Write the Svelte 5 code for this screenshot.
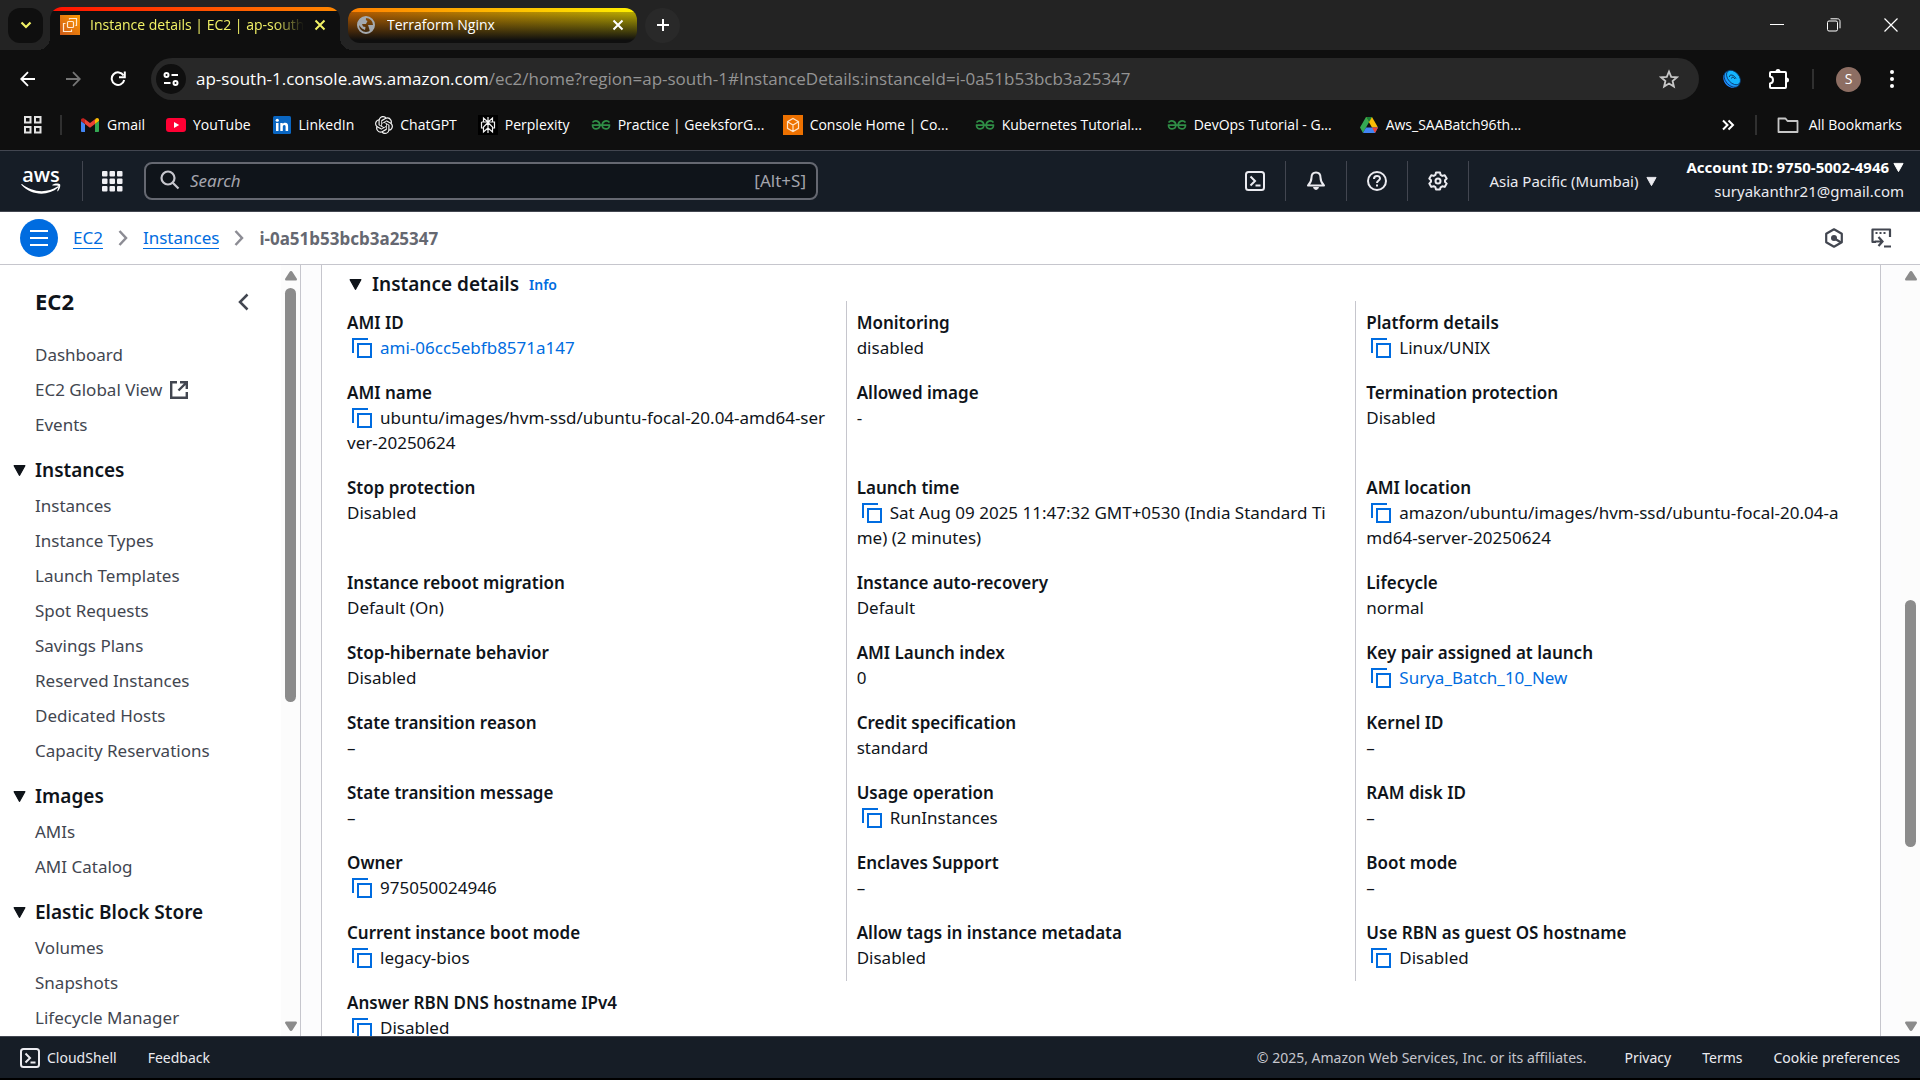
<script>
  const bookmarks = [
    { icon: 'gmail', label: 'Gmail' },
    { icon: 'youtube', label: 'YouTube' },
    { icon: 'linkedin', label: 'LinkedIn' },
    { icon: 'chatgpt', label: 'ChatGPT' },
    { icon: 'perplexity', label: 'Perplexity' },
    { icon: 'gfg', label: 'Practice | GeeksforG...', long: true },
    { icon: 'console', label: 'Console Home | Co...', long: true },
    { icon: 'gfg', label: 'Kubernetes Tutorial...', long: true },
    { icon: 'gfg', label: 'DevOps Tutorial - G...', long: true },
    { icon: 'drive', label: 'Aws_SAABatch96th...', long: true }
  ];

  const topLinks = [
    { label: 'Dashboard' },
    { label: 'EC2 Global View', external: true },
    { label: 'Events' }
  ];

  const groups = [
    {
      title: 'Instances',
      items: ['Instances', 'Instance Types', 'Launch Templates', 'Spot Requests', 'Savings Plans', 'Reserved Instances', 'Dedicated Hosts', 'Capacity Reservations']
    },
    { title: 'Images', items: ['AMIs', 'AMI Catalog'] },
    { title: 'Elastic Block Store', items: ['Volumes', 'Snapshots', 'Lifecycle Manager'] }
  ];

  const fields = [
    { label: 'AMI ID', value: 'ami-06cc5ebfb8571a147', copy: true, link: true },
    { label: 'Monitoring', value: 'disabled' },
    { label: 'Platform details', value: 'Linux/UNIX', copy: true },
    { label: 'AMI name', value: 'ubuntu/images/hvm-ssd/ubuntu-focal-20.04-amd64-server-20250624', copy: true },
    { label: 'Allowed image', value: '-' },
    { label: 'Termination protection', value: 'Disabled' },
    { label: 'Stop protection', value: 'Disabled' },
    { label: 'Launch time', value: 'Sat Aug 09 2025 11:47:32 GMT+0530 (India Standard Time) (2 minutes)', copy: true },
    { label: 'AMI location', value: 'amazon/ubuntu/images/hvm-ssd/ubuntu-focal-20.04-amd64-server-20250624', copy: true },
    { label: 'Instance reboot migration', value: 'Default (On)' },
    { label: 'Instance auto-recovery', value: 'Default' },
    { label: 'Lifecycle', value: 'normal' },
    { label: 'Stop-hibernate behavior', value: 'Disabled' },
    { label: 'AMI Launch index', value: '0' },
    { label: 'Key pair assigned at launch', value: 'Surya_Batch_10_New', copy: true, link: true },
    { label: 'State transition reason', value: '–' },
    { label: 'Credit specification', value: 'standard' },
    { label: 'Kernel ID', value: '–' },
    { label: 'State transition message', value: '–' },
    { label: 'Usage operation', value: 'RunInstances', copy: true },
    { label: 'RAM disk ID', value: '–' },
    { label: 'Owner', value: '975050024946', copy: true },
    { label: 'Enclaves Support', value: '–' },
    { label: 'Boot mode', value: '–' },
    { label: 'Current instance boot mode', value: 'legacy-bios', copy: true },
    { label: 'Allow tags in instance metadata', value: 'Disabled' },
    { label: 'Use RBN as guest OS hostname', value: 'Disabled', copy: true },
    { label: 'Answer RBN DNS hostname IPv4', value: 'Disabled', copy: true }
  ];
</script>

{#snippet caret(size)}
  <svg width={size} height={size} viewBox="0 0 12 12" aria-hidden="true"><path d="M1 1.500h10L6 10.500z" fill="currentColor" stroke="currentColor" stroke-width="1" stroke-linejoin="round" /></svg>
{/snippet}

{#snippet shell()}
  <svg width="20" height="20" viewBox="0 0 20 20" fill="none" stroke="currentColor" stroke-width="2" aria-hidden="true"><rect x="1" y="1" width="18" height="18" rx="2.500" /><path d="M5.500 5.500 10 10l-4.500 4.500M10.500 14.500h5" /></svg>
{/snippet}

{#snippet close()}
  <svg width="12" height="12" viewBox="0 0 12 12" fill="none" stroke="currentColor" stroke-width="2" aria-hidden="true"><path d="M1.500 1.500l9 9M10.500 1.500l-9 9" /></svg>
{/snippet}

{#snippet bookmarkIcon(name)}
  {#if name === 'gmail'}
    <svg width="20" height="20" viewBox="0 0 20 20" aria-hidden="true"><path d="M1 6v10.200c0 .5.400.8.8.8H5V9z" fill="#4285f4" /><path d="M19 6v10.200c0 .5-.4.8-.8.8H15V9z" fill="#34a853" /><path d="M15 4.500V9l4-3V5c0-1.800-2-2.500-3.200-1.400z" fill="#fbbc04" /><path d="M5 9V4.300l5 3.800 5-3.800V9l-5 3.800z" fill="#ea4335" /><path d="M1 5v1l4 3V4.300l-.9-.7C2.900 2.600 1 3.300 1 5z" fill="#c5221f" /></svg>
  {:else if name === 'youtube'}
    <svg width="20" height="20" viewBox="0 0 20 20" aria-hidden="true"><rect x="0" y="3" width="20" height="14" rx="3" fill="#ff0033" /><path d="M8 7l5.200 3L8 13z" fill="#fff" /></svg>
  {:else if name === 'linkedin'}
    <svg width="20" height="20" viewBox="0 0 20 20" aria-hidden="true"><rect x="1" y="1" width="18" height="18" rx="1.500" fill="#0a66c2" /><rect x="4" y="8" width="2.500" height="8" fill="#fff" /><circle cx="5.250" cy="5.250" r="1.600" fill="#fff" /><path d="M8.300 8h2.400v1.100c.5-.8 1.400-1.300 2.500-1.300 2.200 0 2.900 1.400 2.900 3.500V16h-2.500v-4.200c0-1.100-.2-1.900-1.300-1.900-1.100 0-1.500.8-1.500 1.900V16H8.300z" fill="#fff" /></svg>
  {:else if name === 'chatgpt'}
    <svg width="18" height="20" viewBox="0 0 24 24" fill="#f2f2f2" aria-hidden="true"><path d="M22.282 9.821a5.985 5.985 0 0 0-.516-4.910 6.046 6.046 0 0 0-6.510-2.900A6.065 6.065 0 0 0 4.981 4.182a5.985 5.985 0 0 0-3.998 2.900 6.046 6.046 0 0 0 .743 7.097 5.980 5.980 0 0 0 .510 4.911 6.051 6.051 0 0 0 6.515 2.900A5.985 5.985 0 0 0 13.260 24a6.056 6.056 0 0 0 5.772-4.206 5.990 5.990 0 0 0 3.998-2.900 6.056 6.056 0 0 0-.748-7.073zM13.260 22.430a4.476 4.476 0 0 1-2.876-1.040l.141-.081 4.779-2.758a.795.795 0 0 0 .393-.681v-6.737l2.020 1.169a.071.071 0 0 1 .038.052v5.583a4.504 4.504 0 0 1-4.495 4.493zM3.600 18.304a4.471 4.471 0 0 1-.535-3.014l.142.085 4.783 2.759a.771.771 0 0 0 .780 0l5.843-3.369v2.332a.080.080 0 0 1-.033.062L9.740 19.950a4.500 4.500 0 0 1-6.140-1.646zM2.340 7.896a4.485 4.485 0 0 1 2.366-1.973V11.600a.766.766 0 0 0 .388.677l5.815 3.355-2.020 1.168a.076.076 0 0 1-.071 0l-4.830-2.786A4.504 4.504 0 0 1 2.340 7.896zm16.597 3.855l-5.833-3.387L15.119 7.200a.076.076 0 0 1 .071 0l4.830 2.791a4.494 4.494 0 0 1-.676 8.105v-5.678a.790.790 0 0 0-.407-.667zm2.010-3.023l-.141-.085-4.774-2.782a.776.776 0 0 0-.785 0L9.409 9.230V6.897a.066.066 0 0 1 .028-.061l4.830-2.787a4.500 4.500 0 0 1 6.680 4.660zM8.307 12.863l-2.020-1.164a.080.080 0 0 1-.038-.057V6.075a4.500 4.500 0 0 1 7.375-3.453l-.142.080L8.704 5.460a.795.795 0 0 0-.393.681zm1.097-2.365l2.602-1.500 2.607 1.500v2.999l-2.597 1.500-2.607-1.500z" /></svg>
  {:else if name === 'perplexity'}
    <svg width="20" height="20" viewBox="0 0 20 20" fill="none" stroke="#f2f2f2" stroke-width="1.200" aria-hidden="true"><rect width="20" height="20" fill="#000" stroke="none" /><path d="M10 2v16M10 7L5.500 3v4M10 7l4.500-4v4M3.500 7h13v6H14M6 13H3.500V7M10 7.500l-4.500 4.500v5l4.500-4M10 7.500l4.500 4.500v5L10 13" /></svg>
  {:else if name === 'gfg'}
    <svg width="20" height="20" viewBox="0 0 20 20" fill="none" stroke="#2f8d46" stroke-width="1.700" aria-hidden="true"><path d="M1.500 7.500C4 4.500 8.800 5.800 8.800 10.300c0 4.500-7.300 5-7.300 0M18.500 7.500C16 4.500 11.200 5.800 11.200 10.300c0 4.500 7.300 5 7.300 0M.8 10.200h18.400" /></svg>
  {:else if name === 'console'}
    <svg width="20" height="20" viewBox="0 0 20 20" aria-hidden="true"><rect width="20" height="20" fill="#ed7100" /><path d="M10 3.500l5.500 3.200v6.600L10 16.500l-5.500-3.200V6.700zM4.500 6.700L10 10l5.500-3.300M10 10v6.500" fill="none" stroke="#ffe3c7" stroke-width="1.200" /></svg>
  {:else}
    <svg width="20" height="20" viewBox="0 0 20 20" aria-hidden="true"><path d="M7 2h6L7 12.500 4 18 1 12.500z" fill="#34a853" /><path d="M7 2h6l6 10.500h-6z" fill="#fbbc04" /><path d="M7 2h6l-3 5.200z" fill="#188038" /><path d="M4 18l3-5.500h12L16 18z" fill="#4285f4" /><path d="M13 12.500h6L16 18z" fill="#ea4335" /></svg>
  {/if}
{/snippet}

<div class="screen">
  <header class="browser">
    <div class="tabstrip">
      <button class="tab-search" aria-label="Search tabs"><svg width="12" height="12" viewBox="0 0 12 12" fill="none" stroke="currentColor" stroke-width="2.200" aria-hidden="true"><path d="M1.500 3.500L6 8l4.500-4.500" /></svg></button>
      <div class="tab active">
        <svg width="20" height="20" viewBox="0 0 20 20" fill="none" stroke="#ffe9d2" stroke-width="1.200" aria-hidden="true">
          <defs><linearGradient id="ec2" x1="0" y1="1" x2="1" y2="0"><stop offset="0" stop-color="#cc5a1a" /><stop offset="1" stop-color="#ff9900" /></linearGradient></defs>
          <rect width="20" height="20" fill="url(#ec2)" stroke="none" />
          <rect x="7.500" y="6.500" width="6" height="6" rx="1" />
          <path d="M9.500 4.500v-1h7v7h-1M5.500 8.500h-2v8h8v-2" />
        </svg>
        <span class="tab-title faded">Instance details | EC2 | ap-south</span>
        <button aria-label="Close tab">{@render close()}</button>
      </div>
      <div class="tab idle">
        <svg width="18" height="18" viewBox="0 0 18 18" aria-hidden="true"><circle cx="9" cy="9" r="8" fill="none" stroke="#a4a9ae" stroke-width="2" /><path d="M10 1c-2 2-1 3.500.5 4L9 8H5l1 2.500 2.500.5-.5 3-3-1.500L1 8c0-4 4-8 9-7zM11 9h6l-1 4-3 3-1-4z" fill="#a4a9ae" /></svg>
        <span class="tab-title">Terraform Nginx</span>
        <button aria-label="Close tab">{@render close()}</button>
      </div>
      <button class="new-tab" aria-label="New tab"><svg width="14" height="14" viewBox="0 0 14 14" stroke="#fff" stroke-width="2" aria-hidden="true"><path d="M7 1v12M1 7h12" /></svg></button>
      <div class="window-controls">
        <button aria-label="Minimize"><svg width="14" height="14" viewBox="0 0 14 14" stroke="#fff" aria-hidden="true"><path d="M0 6.500h14" /></svg></button>
        <button aria-label="Restore"><svg width="14" height="14" viewBox="0 0 14 14" fill="none" stroke="#fff" aria-hidden="true"><rect x=".5" y="3" width="10" height="10" rx="1.500" /><path d="M3.500.8h7c1.500 0 2.500 1 2.500 2.500v7" /></svg></button>
        <button aria-label="Close"><svg width="14" height="14" viewBox="0 0 14 14" stroke="#fff" stroke-width="1.200" aria-hidden="true"><path d="M.5.5l13 13M13.500.5l-13 13" /></svg></button>
      </div>
    </div>

    <div class="toolbar">
      <div class="nav-buttons">
        <button aria-label="Back"><svg width="16" height="16" viewBox="0 0 16 16" fill="none" stroke="#fff" stroke-width="1.800" aria-hidden="true"><path d="M15 8H1.500M8 1.200L1.200 8 8 14.800" /></svg></button>
        <button aria-label="Forward"><svg width="16" height="16" viewBox="0 0 16 16" fill="none" stroke="#757575" stroke-width="1.800" aria-hidden="true"><path d="M1 8h13.500M8 1.200L14.800 8 8 14.800" /></svg></button>
        <button aria-label="Reload"><svg width="16" height="16" viewBox="0 0 16 16" fill="none" stroke="#fff" stroke-width="2" aria-hidden="true"><path d="M13.500 4.500A6.300 6.300 0 1 0 14.200 9M14.800.5v5.700H9" /></svg></button>
      </div>
      <div class="omnibox">
        <button class="site-info" aria-label="Site information"><svg width="16" height="16" viewBox="0 0 16 16" fill="none" stroke="#fff" stroke-width="2" aria-hidden="true"><circle cx="3.500" cy="4" r="2" /><path d="M8.500 4H15M1 12h6.500" /><circle cx="12.500" cy="12" r="2" /></svg></button>
        <div class="url" role="textbox" tabindex="0" aria-label="Address" contenteditable="true" spellcheck="false"><span class="host">ap-south-1.console.aws.amazon.com</span>/ec2/home?region=ap-south-1#InstanceDetails:instanceId=i-0a51b53bcb3a25347</div>
        <button aria-label="Bookmark this page"><svg width="20" height="20" viewBox="0 0 20 20" fill="none" stroke="#c7c7c7" stroke-width="1.800" aria-hidden="true"><path d="M10 2.500l2.200 5.300 5.700.5-4.300 3.700 1.300 5.600-4.900-3-4.900 3 1.300-5.600L2.100 8.300l5.700-.5z" /></svg></button>
      </div>
      <div class="extensions">
        <button aria-label="Extension"><svg width="20" height="20" viewBox="0 0 20 20" aria-hidden="true"><path d="M1.500 6c-1.500 6 3 13 10.500 13l1-2C7 17 2.500 12 2.500 6z" fill="#1e88ff" /><ellipse cx="10" cy="10" rx="6.500" ry="9.500" transform="rotate(-42 10 10)" fill="#1a9bff" stroke="#0b2f5c" stroke-width=".8" /><ellipse cx="11.500" cy="8.500" rx="5.500" ry="8.500" transform="rotate(-42 11.500 8.500)" fill="#14b4ff" stroke="#0b2f5c" stroke-width=".8" /><path d="M7.500 8c-.5-3 4.500-2.500 6.500 1.500M9.500 9.500c0-2 2.500-1.500 3.500.5" fill="none" stroke="#0b2f5c" /></svg></button>
        <button aria-label="Extensions"><svg width="22" height="22" viewBox="0 0 22 22" aria-hidden="true"><path d="M3 4h14c.6 0 1 .4 1 1v14c0 .6-.4 1-1 1H3c-.6 0-1-.4-1-1v-3.500c4-.5 4-6.500 0-7V5c0-.6.400-1 1-1z" fill="none" stroke="#fff" stroke-width="2" stroke-linejoin="round" /><path d="M7.500 3.500a2.500 2.500 0 0 1 5 0zM18.500 9.500a2.500 2.500 0 0 1 0 5z" fill="#fff" /></svg></button>
        <span class="divider"></span>
        <button class="avatar" aria-label="Profile">S</button>
        <button aria-label="Menu"><svg width="6" height="20" viewBox="0 0 6 20" fill="#fff" aria-hidden="true"><circle cx="3" cy="3" r="2" /><circle cx="3" cy="10" r="2" /><circle cx="3" cy="17" r="2" /></svg></button>
      </div>
    </div>

    <nav class="bookmarks" aria-label="Bookmarks">
      <button aria-label="Apps"><svg width="18" height="18" viewBox="0 0 18 18" fill="none" stroke="#e3e3e3" stroke-width="2" aria-hidden="true"><rect x="1" y="1" width="5.500" height="5.500" /><rect x="11" y="1" width="5.500" height="5.500" /><rect x="1" y="11" width="5.500" height="5.500" /><rect x="11" y="11" width="5.500" height="5.500" /></svg></button>
      <span class="divider"></span>
      <div class="bookmark-list">
        {#each bookmarks as b}
          <a href="#bookmark" class:long={b.long}>{@render bookmarkIcon(b.icon)}{b.label}</a>
        {/each}
      </div>
      <div class="bookmark-end">
        <button aria-label="More bookmarks"><svg width="14" height="12" viewBox="0 0 14 12" fill="none" stroke="#fff" stroke-width="2" aria-hidden="true"><path d="M2 1.500L6.500 6 2 10.500M7.500 1.500L12 6l-4.500 4.500" /></svg></button>
        <span class="divider"></span>
        <a href="#all"><svg width="22" height="18" viewBox="0 0 22 18" fill="none" stroke="#c7c7c7" stroke-width="1.800" stroke-linejoin="round" aria-hidden="true"><path d="M1.500 2.500h7l2 2.500h10v11h-19z" /></svg>All Bookmarks</a>
      </div>
    </nav>
  </header>

  <header class="aws-nav">
    <a class="aws-logo" href="#home" aria-label="AWS home">
      <span>aws</span>
      <svg width="40" height="12" viewBox="0 0 40 12" aria-hidden="true"><path d="M1 1c10 8.500 25 9.500 35.500 2.500.8-.5 1.500.4.700 1.100C27 13.500 10 12.500.5 2 0 1.300.5.6 1 1z" fill="#fff" /><path d="M31.500 1.700c2.200-1.500 6.500-1.500 7.500-.5.8 1.100-.2 5-2.200 7-.4.300-.7.100-.6-.3.700-1.700 1.500-4.200 1-4.900-.6-.7-3.400-.5-5.400-.5-.5 0-.7-.5-.3-.8z" fill="#fff" /></svg>
    </a>
    <span class="rule"></span>
    <button class="services" aria-label="Services"><svg width="21" height="21" viewBox="0 0 21 21" fill="#f0f0f4" aria-hidden="true">{#each [0, 7.5, 15] as y}{#each [0, 7.5, 15] as x}<rect {x} {y} width="5.500" height="5.500" rx="1" />{/each}{/each}</svg></button>
    <label class="search">
      <svg width="20" height="20" viewBox="0 0 20 20" fill="none" stroke="#c6c6cd" stroke-width="2.200" aria-hidden="true"><circle cx="8" cy="8" r="6.500" /><path d="M12.500 12.500l6 6" /></svg>
      <input type="text" placeholder="Search" aria-label="Search" />
      <span>[Alt+S]</span>
    </label>
    <div class="aws-tools">
      <button aria-label="CloudShell">{@render shell()}</button>
      <span class="rule"></span>
      <button aria-label="Notifications"><svg width="20" height="20" viewBox="0 0 20 20" fill="none" stroke="currentColor" stroke-width="2" stroke-linejoin="round" aria-hidden="true"><path d="M10 1.500c-3 0-4.500 2-4.500 5 0 4-1.500 6-3.500 8h16c-2-2-3.500-4-3.500-8 0-3-1.500-5-4.500-5z" /><path d="M7.500 16.500a2.600 2.600 0 0 0 5 0z" fill="currentColor" stroke-width="1" /></svg></button>
      <span class="rule"></span>
      <button aria-label="Help"><svg width="20" height="20" viewBox="0 0 20 20" fill="none" stroke="currentColor" stroke-width="2" aria-hidden="true"><circle cx="10" cy="10" r="9" /><path d="M7 8c0-4 6-4 6-.5 0 2-3 2-3 4.500M10 13.500v2" /></svg></button>
      <span class="rule"></span>
      <button aria-label="Settings"><svg width="20" height="20" viewBox="0 0 20 20" fill="none" stroke="currentColor" stroke-width="2" stroke-linejoin="round" aria-hidden="true"><path d="M8 1.500h4l.6 2.400 1.700 1 2.400-.7 2 3.400L17 9.300v1.600l1.700 1.700-2 3.300-2.400-.6-1.700 1-.6 2.200H8l-.6-2.300-1.700-1-2.400.7-2-3.300L3 10.800V9.300L1.300 7.600l2-3.400 2.400.7 1.700-1z" /><circle cx="10" cy="10" r="2.500" /></svg></button>
      <span class="rule"></span>
      <button class="region">Asia Pacific (Mumbai) {@render caret(11)}</button>
      <button class="account"><strong>Account ID: 9750-5002-4946 {@render caret(11)}</strong><span>suryakanthr21@gmail.com</span></button>
    </div>
  </header>

  <nav class="crumbs" aria-label="Breadcrumbs">
    <button class="menu" aria-label="Open navigation"><svg width="18" height="18" viewBox="0 0 18 18" stroke="#fff" stroke-width="2" aria-hidden="true"><path d="M0 2h18M0 9h18M0 16h18" /></svg></button>
    <a href="#ec2">EC2</a>
    <svg width="10" height="16" viewBox="0 0 10 16" fill="none" stroke="#8c8c94" stroke-width="2.500" aria-hidden="true"><path d="M1.500 1l6.500 7-6.500 7" /></svg>
    <a href="#instances">Instances</a>
    <svg width="10" height="16" viewBox="0 0 10 16" fill="none" stroke="#8c8c94" stroke-width="2.500" aria-hidden="true"><path d="M1.500 1l6.500 7-6.500 7" /></svg>
    <span class="current">i-0a51b53bcb3a25347</span>
    <div class="crumb-tools">
      <button aria-label="Amazon Q"><svg width="20" height="20" viewBox="0 0 20 20" fill="none" stroke="currentColor" stroke-width="2.200" stroke-linejoin="round" aria-hidden="true"><path d="M10 1.300l7.800 4.400v8.600L10 18.700l-7.800-4.400V5.700z" /><circle cx="10" cy="10" r="3" fill="currentColor" stroke="none" /><path d="M10.500 10.500l6.500 4" /></svg></button>
      <button aria-label="Connect"><svg width="21" height="20" viewBox="0 0 21 20" fill="none" stroke="currentColor" stroke-width="2.200" aria-hidden="true"><path d="M5 14H1.500V1.500h17.500V9" stroke-linejoin="round" /><path d="M4.500 5h2M8.500 5h2M12.500 5h2" /><path d="M3.500 13.500H11M7.500 9l4 4.500-4 4.500M13 18.500h7" /></svg></button>
    </div>
  </nav>

  <div class="workspace">
    <aside class="sidebar">
      <nav class="side-links" aria-label="EC2">
        <div class="side-head">
          <a href="#ec2home">EC2</a>
          <button aria-label="Close navigation"><svg width="11" height="18" viewBox="0 0 11 18" fill="none" stroke="#424650" stroke-width="2.500" aria-hidden="true"><path d="M9.500 1.500L2 9l7.500 7.500" /></svg></button>
        </div>
        <ul>
          {#each topLinks as l}
            <li><a href="#link">{l.label}{#if l.external}<svg width="18" height="18" viewBox="0 0 18 18" fill="none" stroke="currentColor" stroke-width="2.400" aria-hidden="true"><path d="M7 1.200H1.200v15.600h15.600V11M10 1.200h6.800V8M16.500 1.500L8.500 9.500" /></svg>{/if}</a></li>
          {/each}
        </ul>
        {#each groups as g}
          <button class="group">{@render caret(13)}{g.title}</button>
          <ul>
            {#each g.items as item}<li><a href="#link">{item}</a></li>{/each}
          </ul>
        {/each}
      </nav>
      <div class="scrollbar side-scroll">
        <svg width="12" height="10" viewBox="0 0 12 10" fill="#8b8b8b" aria-hidden="true"><path d="M6 0q1 0 1.500 1L12 8q0 1.500-1 1.500H1Q0 9.500 0 8l4.500-7Q5 0 6 0z" /></svg>
        <span class="track"><span class="thumb"></span></span>
        <svg width="12" height="10" viewBox="0 0 12 10" fill="#8b8b8b" aria-hidden="true"><path d="M6 10q1 0 1.500-1L12 2q0-1.500-1-1.500H1Q0 .5 0 2l4.500 7q.5 1 1.500 1z" /></svg>
      </div>
    </aside>

    <main>
      <section class="panel">
        <h2>{@render caret(13)}Instance details <a href="#info">Info</a></h2>
        <dl>
          {#each fields as f}
            <div class="field">
              <dt>{f.label}</dt>
              <dd>
                {#if f.copy}<button class="copy" aria-label={'Copy ' + f.label}><svg width="20" height="20" viewBox="0 0 20 20" fill="none" stroke="#006ce0" stroke-width="2" aria-hidden="true"><path d="M1 15V1h15M6 6h13v13H6z" /></svg></button>{/if}{#if f.link}<a href="#value">{f.value}</a>{:else}{f.value}{/if}
              </dd>
            </div>
          {/each}
        </dl>
      </section>
    </main>
    <div class="scrollbar page-scroll">
      <svg width="12" height="10" viewBox="0 0 12 10" fill="#8b8b8b" aria-hidden="true"><path d="M6 0q1 0 1.500 1L12 8q0 1.500-1 1.500H1Q0 9.500 0 8l4.500-7Q5 0 6 0z" /></svg>
      <span class="track"><span class="thumb"></span></span>
      <svg width="12" height="10" viewBox="0 0 12 10" fill="#8b8b8b" aria-hidden="true"><path d="M6 10q1 0 1.500-1L12 2q0-1.500-1-1.500H1Q0 .5 0 2l4.500 7q.5 1 1.500 1z" /></svg>
    </div>
  </div>

  <footer>
    <button>{@render shell()}CloudShell</button>
    <button>Feedback</button>
    <span class="legal">© 2025, Amazon Web Services, Inc. or its affiliates.</span>
    <a href="#privacy">Privacy</a>
    <a href="#terms">Terms</a>
    <button>Cookie preferences</button>
  </footer>
</div>

<style>
  :global(body) {
    background: #000;
  }
  .screen,
  .screen * {
    box-sizing: border-box;
  }
  .screen {
    height: 100vh;
    display: flex;
    flex-direction: column;
    padding-bottom: 2px;
    overflow: hidden;
    font-family: 'Noto Sans', 'Open Sans', sans-serif;
    font-size: 17px;
    line-height: 25px;
    color: #0f141a;
  }
  button {
    background: none;
    border: 0;
    padding: 0;
    margin: 0;
    font: inherit;
    color: inherit;
    display: flex;
    align-items: center;
    flex-shrink: 0;
  }
  svg {
    flex-shrink: 0;
  }
  a {
    color: #006ce0;
    text-decoration: none;
  }
  ul,
  dl,
  dd {
    margin: 0;
    padding: 0;
    list-style: none;
  }

  /* Browser frame */
  .browser {
    background: #0f0f0f;
    color: #fff;
    font-family: 'Open Sans', 'Noto Sans', sans-serif;
    font-size: 14px;
    line-height: 20px;
    flex-shrink: 0;
  }
  .tabstrip {
    background: #232323;
    height: 50px;
    display: flex;
    align-items: center;
    padding-left: 8px;
  }
  .tab-search {
    width: 35px;
    height: 35px;
    border-radius: 12px;
    background: #0f0f0f;
    color: #f2f266;
    justify-content: center;
  }
  .tab {
    display: flex;
    align-items: center;
    gap: 10px;
  }
  .tab-title {
    flex: 1;
    white-space: nowrap;
    overflow: hidden;
  }
  .tab.active {
    position: relative;
    align-self: flex-end;
    width: 290px;
    height: 43px;
    margin-left: 7px;
    padding: 0 14px 8px 10px;
    background: linear-gradient(to right, #ff1000, #ff8800) top / 100% 4px no-repeat #0f0f0f;
    border-radius: 12px 12px 0 0;
    color: #f2f266;
  }
  .tab.active::before,
  .tab.active::after {
    content: '';
    position: absolute;
    bottom: 0;
    width: 12px;
    height: 12px;
  }
  .tab.active::before {
    left: -12px;
    background: radial-gradient(circle at 0 0, transparent 12px, #0f0f0f 12px);
  }
  .tab.active::after {
    right: -12px;
    background: radial-gradient(circle at 100% 0, transparent 12px, #0f0f0f 12px);
  }
  .faded {
    mask-image: linear-gradient(to right, #000 86%, transparent);
  }
  .tab.idle {
    width: 289px;
    height: 35px;
    margin-left: 8px;
    padding: 0 13px 0 9px;
    gap: 12px;
    border-radius: 12px;
    background:
      linear-gradient(to right, #ff8000, #fff000) top / 100% 4px no-repeat,
      linear-gradient(to bottom, transparent, #0f0f0f 92%),
      linear-gradient(to right, #c86400, #d0c000);
  }
  .new-tab {
    width: 35px;
    height: 35px;
    margin-left: 8px;
    border-radius: 50%;
    background: #292929;
    justify-content: center;
  }
  .window-controls {
    margin-left: auto;
    padding-right: 1px;
    display: flex;
  }
  .window-controls button {
    width: 57px;
    height: 48px;
    justify-content: center;
  }
  .toolbar {
    display: flex;
    align-items: center;
    height: 58px;
    padding: 0 25px 0 20px;
  }
  .nav-buttons {
    display: flex;
    gap: 29px;
    width: 131px;
  }
  .omnibox {
    flex: 1;
    display: flex;
    align-items: center;
    height: 42px;
    border-radius: 21px;
    background: #282828;
    padding: 0 20px 0 5px;
    color: #949494;
    font-size: 17px;
  }
  .site-info {
    width: 30px;
    height: 30px;
    border-radius: 50%;
    background: #0f0f0f;
    justify-content: center;
    margin-right: 10px;
  }
  .url {
    flex: 1;
    white-space: nowrap;
    outline: none;
  }
  .host {
    color: #fff;
  }
  .extensions {
    display: flex;
    align-items: center;
    margin-left: 23px;
    gap: 22px;
  }
  .divider {
    width: 2px;
    height: 20px;
    background: #303030;
  }
  .avatar {
    width: 25px;
    height: 25px;
    border-radius: 50%;
    background: #8d6e63;
    justify-content: center;
  }
  .extensions button:first-child {
    margin-right: 4px;
  }
  .extensions button:last-child {
    margin-left: 6px;
  }
  .bookmarks {
    display: flex;
    align-items: center;
    height: 42px;
    padding: 0 18px 8px 24px;
  }
  .bookmarks a {
    display: flex;
    align-items: center;
    gap: 7px;
    color: #fff;
    white-space: nowrap;
  }
  .bookmarks > .divider {
    margin: 0 18px;
  }
  .bookmark-list {
    display: flex;
    gap: 21px;
    flex: 1;
  }
  .bookmarks .long {
    width: 171px;
  }
  .bookmark-end {
    display: flex;
    align-items: center;
    gap: 20px;
  }
  .bookmark-end a {
    gap: 10px;
  }

  /* AWS navigation */
  .aws-nav {
    flex-shrink: 0;
    display: flex;
    align-items: center;
    height: 62px;
    padding: 0 16px 0 21px;
    background: #161d26;
    border-top: 1px solid #424650;
    border-bottom: 1px solid #424650;
    color: #ebebf0;
    font-size: 15px;
  }
  .aws-logo {
    width: 40px;
    display: flex;
    flex-direction: column;
    align-items: center;
    color: #fff;
    font: 600 20px/16px 'Open Sans', sans-serif;
  }
  .rule {
    width: 1px;
    height: 40px;
    background: #424650;
  }
  .aws-nav > .rule {
    margin: 0 19px 0 21px;
  }
  .search {
    display: flex;
    align-items: center;
    gap: 10px;
    width: 674px;
    height: 38px;
    margin-left: 21px;
    padding: 0 10px 2px 14px;
    border: 2px solid #656871;
    border-radius: 8px;
    background: #0f141a;
    color: #a4a4ad;
    font-size: 17px;
  }
  .search input {
    flex: 1;
    min-width: 0;
    border: 0;
    padding: 0;
    background: none;
    color: inherit;
    font: inherit;
    outline: none;
  }
  .search input::placeholder {
    color: #a4a4ad;
    font-style: italic;
    opacity: 1;
  }
  .aws-tools {
    display: flex;
    align-items: center;
    gap: 20px;
    margin-left: auto;
  }
  .region {
    gap: 8px;
  }
  .account {
    flex-direction: column;
    align-items: flex-end;
    margin-left: 9px;
    padding-bottom: 4px;
    line-height: 24px;
  }
  .account strong {
    color: #fff;
  }

  /* Breadcrumbs */
  .crumbs {
    flex-shrink: 0;
    display: flex;
    align-items: center;
    gap: 15px;
    height: 53px;
    padding: 0 28px 0 20px;
    background: #fff;
    border-bottom: 1px solid #c6c6cd;
  }
  .menu {
    width: 38px;
    height: 38px;
    border-radius: 50%;
    background: #006ce0;
    justify-content: center;
  }
  .crumbs a {
    line-height: 21px;
    border-bottom: 1px solid #006ce0;
  }
  .current {
    color: #656871;
    font-weight: 700;
  }
  .crumb-tools {
    display: flex;
    gap: 27px;
    margin-left: auto;
    color: #424650;
  }

  /* Workspace */
  .workspace {
    flex: 1;
    min-height: 0;
    display: flex;
    background: #fcfcfd;
  }
  .sidebar {
    width: 301px;
    flex-shrink: 0;
    display: flex;
    background: #fff;
    border-right: 1px solid #c6c6cd;
  }
  .side-links {
    flex: 1;
    overflow: hidden;
    padding: 18px 32px 0 13px;
    color: #424650;
  }
  .side-head {
    display: flex;
    align-items: center;
    justify-content: space-between;
    height: 37px;
    margin-bottom: 17px;
    padding-left: 22px;
  }
  .side-head a {
    color: #0f141a;
    font-size: 22px;
    font-weight: 700;
  }
  .side-links ul {
    padding-left: 22px;
  }
  .side-links li a {
    display: flex;
    align-items: center;
    gap: 8px;
    height: 35px;
    color: #424650;
    white-space: nowrap;
  }
  .group {
    height: 35px;
    margin-top: 11px;
    gap: 9px;
    color: #0f141a;
    font-size: 19px;
    font-weight: 600;
  }
  .scrollbar {
    display: flex;
    flex-direction: column;
    align-items: center;
    width: 19px;
    padding: 6px 0 5px;
    background: #fcfcfc;
  }
  .track {
    flex: 1;
    display: flex;
    flex-direction: column;
    margin: 7px 0;
  }
  .thumb {
    width: 11px;
    border-radius: 6px;
    background: #8b8b8b;
  }
  .side-scroll .thumb {
    height: 57%;
  }
  .page-scroll .thumb {
    height: 34%;
    margin-top: 312px;
  }
  main {
    flex: 1;
    min-width: 0;
    overflow: hidden;
    padding: 0 20px;
  }
  .panel {
    height: 100%;
    padding: 6px 15px 0 14px;
    background: #fff;
    border-left: 1px solid #c6c6cd;
    border-right: 1px solid #c6c6cd;
  }
  h2 {
    display: flex;
    align-items: center;
    gap: 10px;
    height: 27px;
    margin: 0 0 3px;
    padding-left: 13px;
    font-size: 19px;
    font-weight: 600;
  }
  h2 a {
    font-size: 14px;
  }
  dl {
    display: grid;
    grid-template-columns: repeat(3, 1fr);
  }
  .field {
    padding: 9px 16px 11px 10px;
    border-left: 1px solid #c6c6cd;
    word-break: break-all;
  }
  .field:nth-child(3n + 1) {
    border-left-color: transparent;
  }
  dt {
    font-weight: 600;
  }
  .copy {
    display: inline-flex;
    margin: 0 8px 0 5px;
    vertical-align: -4px;
    height: 20px;
  }

  footer {
    flex-shrink: 0;
    display: flex;
    align-items: center;
    gap: 31px;
    height: 42px;
    padding: 0 20px;
    background: #161d26;
    border-top: 1px solid #424650;
    color: #ebebf0;
    font-size: 14px;
  }
  footer button {
    gap: 7px;
  }
  footer a {
    color: #ebebf0;
  }
  .legal {
    margin-left: auto;
    padding-right: 7px;
    color: #c6c6cd;
  }
</style>
